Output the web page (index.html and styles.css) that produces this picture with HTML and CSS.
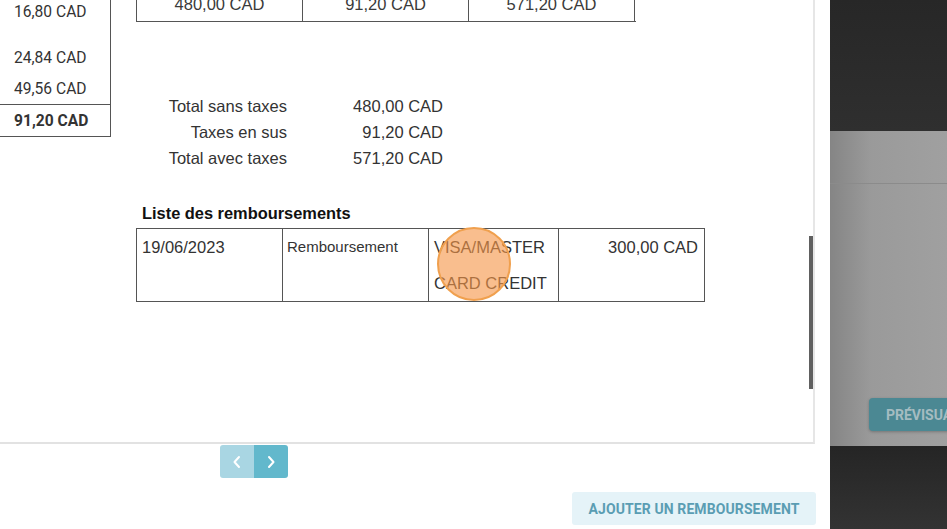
FILE: index.html
```html
<!DOCTYPE html>
<html>
<head>
  <title>Remboursements</title>
  <link rel="stylesheet" href="styles.css">
</head>
<body>
  <div class="main">
    <div class="preview">
      <div class="doc">
        <div class="side-table">
          <div class="side-row r1">16,80 CAD</div>
          <div class="side-row r2">24,84 CAD</div>
          <div class="side-row r3">49,56 CAD</div>
          <div class="side-row total">91,20 CAD</div>
        </div>

        <div class="doc-body">
          <div class="sum-table">
            <div class="sum-cell">480,00 CAD</div>
            <div class="sum-cell">91,20 CAD</div>
            <div class="sum-cell">571,20 CAD</div>
          </div>

          <div class="totals">
            <span class="label">Total sans taxes</span><span class="value">480,00 CAD</span>
            <span class="label">Taxes en sus</span><span class="value">91,20 CAD</span>
            <span class="label">Total avec taxes</span><span class="value">571,20 CAD</span>
          </div>

          <h3 class="refund-title">Liste des remboursements</h3>
          <div class="refunds">
            <div class="cell">19/06/2023</div>
            <div class="cell small">Remboursement</div>
            <div class="cell">VISA/MASTER CARD CREDIT</div>
            <div class="cell amount">300,00 CAD</div>
          </div>
        </div>
      </div>

      <!-- click marker + scrollbar sit over the document -->
      <div class="click-dot"></div>
      <div class="scroll-thumb"></div>
    </div>

    <div class="pager">
      <button class="page-btn prev">
        <svg width="10" height="14" viewBox="0 0 10 14"><polyline points="7,2 2.5,7 7,12" fill="none" stroke="#fff" stroke-width="2" stroke-linecap="round" stroke-linejoin="round"/></svg>
      </button>
      <button class="page-btn next">
        <svg width="10" height="14" viewBox="0 0 10 14"><polyline points="3,2 7.5,7 3,12" fill="none" stroke="#fff" stroke-width="2" stroke-linecap="round" stroke-linejoin="round"/></svg>
      </button>
    </div>

    <div class="actions">
      <button class="add-btn">AJOUTER UN REMBOURSEMENT</button>
    </div>
  </div>

  <div class="aside">
    <div class="aside-top"></div>
    <div class="modal">
      <div class="modal-head"></div>
      <div class="modal-body">
        <button class="preview-btn">PRÉVISUALISER</button>
      </div>
    </div>
    <div class="aside-bottom"></div>
  </div>
</body>
</html>
```

FILE: styles.css
```css
body {
  margin: 0;
  padding: 0;
  display: flex;
  height: 529px;
  overflow: hidden;
  font-family: Roboto, "Liberation Sans", Arial, sans-serif;
  background: #fff;
}

.main {
  width: 830px;
  flex-shrink: 0;
  background: #fff;
}

.preview {
  position: relative;
  width: 813px;
  height: 442px;
  border-right: 2px solid #e6e6e6;
  border-bottom: 2px solid #e2e2e2;
  overflow: hidden;
}

.doc {
  display: flex;
  align-items: flex-start;
  margin-top: -20px;
  color: #333;
  font-family: "Liberation Sans", Arial, sans-serif;
  font-size: 16.5px;
}

.side-table {
  width: 110px;
  border-right: 1px solid #555;
  border-bottom: 1px solid #555;
  font-family: Roboto, Arial, sans-serif;
  font-size: 15.6px;
  color: #333;
}

.side-row {
  display: flex;
  align-items: center;
  padding-left: 14px;
}

.side-row.r1 { height: 63px; }
.side-row.r2 { height: 30px; }
.side-row.r3 { height: 31px; }

.side-row.total {
  height: 31px;
  border-top: 1px solid #555;
  font-weight: 700;
}

.doc-body {
  padding-left: 25px;
}

.sum-table {
  display: grid;
  grid-template-columns: 166px 166px 166px;
  width: 499px;
  border-left: 1px solid #555;
  border-bottom: 1px solid #555;
  color: #3a3a3a;
}

.sum-cell {
  height: 33px;
  padding-top: 8px;
  display: flex;
  align-items: center;
  justify-content: center;
  border-right: 1px solid #555;
}

.totals {
  display: grid;
  grid-template-columns: 151px 156px;
  margin-top: 71px;
  line-height: 26px;
}

.totals .label,
.totals .value {
  text-align: right;
}

.refund-title {
  margin: 32px 0 5px 6px;
  font-size: 16.4px;
  line-height: 20px;
  font-weight: 700;
  color: #111;
}

.refunds {
  display: grid;
  grid-template-columns: 146px 146px 130px 146px;
  width: 568px;
  border-top: 1px solid #555;
  border-left: 1px solid #555;
}

.cell {
  min-height: 72px;
  line-height: 36px;
  padding: 0 6px 0 5px;
  border-right: 1px solid #555;
  border-bottom: 1px solid #555;
}

.cell.small {
  font-size: 15px;
  padding-left: 4px;
}

.cell.amount {
  text-align: right;
}

.click-dot {
  position: absolute;
  left: 437px;
  top: 227px;
  width: 70px;
  height: 70px;
  border: 2px solid #f0a04e;
  border-radius: 50%;
  background: rgba(246, 150, 72, 0.62);
}

.scroll-thumb {
  position: absolute;
  left: 809px;
  top: 236px;
  width: 4px;
  height: 153px;
  background: #606060;
}

.pager {
  display: flex;
  padding-left: 220px;
  margin-top: 1px;
}

.page-btn {
  width: 34px;
  height: 33px;
  border: none;
  padding: 0;
  display: flex;
  align-items: center;
  justify-content: center;
}

.page-btn.prev {
  background: #a9d6e3;
  border-radius: 3px 0 0 3px;
}

.page-btn.next {
  background: #62b8cc;
  border-radius: 0 3px 3px 0;
}

.actions {
  display: flex;
  justify-content: flex-end;
  padding-right: 14px;
  margin-top: 14px;
}

.add-btn {
  height: 33px;
  width: 244px;
  border: none;
  border-radius: 3px;
  background: #e5f3f8;
  color: #5a9db3;
  font-family: Roboto, Arial, sans-serif;
  font-size: 14px;
  font-weight: 700;
  letter-spacing: 0.1px;
}

.aside {
  flex: 1;
  display: flex;
  flex-direction: column;
  background: #2b2b2b;
  overflow: hidden;
}

.aside-top {
  height: 131px;
  background: linear-gradient(to bottom, #272727, #2f2f2f);
}

.modal {
  height: 315px;
  background: linear-gradient(to right, #858585, #9a9a9a 35%, #a0a0a0);
}

.modal-head {
  height: 52px;
  border-bottom: 1px solid #8b8b8b;
}

.modal-body {
  padding: 214px 0 0 39px;
}

.preview-btn {
  height: 33px;
  padding: 0 17px;
  border: none;
  border-radius: 4px;
  background: #4b8893;
  color: #a5bcc1;
  font-family: Roboto, Arial, sans-serif;
  font-size: 14px;
  font-weight: 700;
  white-space: nowrap;
  box-shadow: 0 1px 3px rgba(0, 0, 0, 0.25);
}

.aside-bottom {
  flex: 1;
  background: linear-gradient(to bottom, #252525, #333);
}
```
